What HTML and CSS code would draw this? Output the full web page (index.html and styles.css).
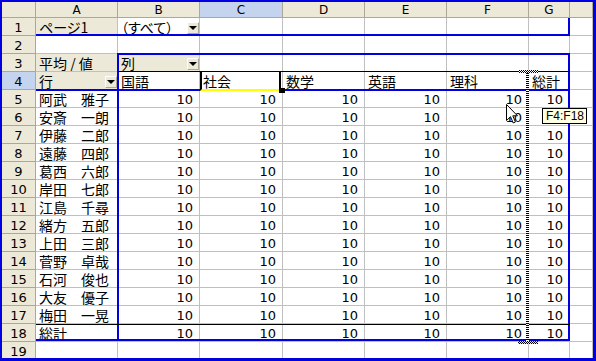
FILE: index.html
```html
<html>
    <head>
        <meta charset="utf-8">
        <title>ピボットテーブル</title>
        <link rel="stylesheet" href="styles.css">
    </head>
    <body>
        <div class="sheet">
            <div class="cells">
                <div class="ch"></div><div class="ch">A</div><div class="ch">B</div><div class="ch on">C</div><div class="ch">D</div><div class="ch">E</div><div class="ch">F</div><div class="ch">G</div><div class="ch"></div>

                <div class="rh">1</div><div class="fld pa">ページ1</div><div class="dd pa">（すべて）<i class="arrow"></i></div><div></div><div></div><div></div><div></div><div></div><div></div>
                <div class="rh">2</div><div></div><div></div><div></div><div></div><div></div><div></div><div></div><div></div>
                <div class="rh">3</div><div class="fld">平均 / 値</div><div class="fld dd">列<i class="arrow"></i></div><div></div><div></div><div></div><div></div><div></div><div></div>
                <div class="rh on">4</div><div class="fld dd">行<i class="arrow"></i></div><div>国語</div><div>社会</div><div>数学</div><div>英語</div><div>理科</div><div>総計</div><div></div>

                <div class="rh">5</div><div>阿武　雅子</div><div class="n">10</div><div class="n">10</div><div class="n">10</div><div class="n">10</div><div class="n">10</div><div class="n">10</div><div></div>
                <div class="rh">6</div><div>安斎　一朗</div><div class="n">10</div><div class="n">10</div><div class="n">10</div><div class="n">10</div><div class="n">10</div><div class="n">10</div><div></div>
                <div class="rh">7</div><div>伊藤　二郎</div><div class="n">10</div><div class="n">10</div><div class="n">10</div><div class="n">10</div><div class="n">10</div><div class="n">10</div><div></div>
                <div class="rh">8</div><div>遠藤　四郎</div><div class="n">10</div><div class="n">10</div><div class="n">10</div><div class="n">10</div><div class="n">10</div><div class="n">10</div><div></div>
                <div class="rh">9</div><div>葛西　六郎</div><div class="n">10</div><div class="n">10</div><div class="n">10</div><div class="n">10</div><div class="n">10</div><div class="n">10</div><div></div>
                <div class="rh">10</div><div>岸田　七郎</div><div class="n">10</div><div class="n">10</div><div class="n">10</div><div class="n">10</div><div class="n">10</div><div class="n">10</div><div></div>
                <div class="rh">11</div><div>江島　千尋</div><div class="n">10</div><div class="n">10</div><div class="n">10</div><div class="n">10</div><div class="n">10</div><div class="n">10</div><div></div>
                <div class="rh">12</div><div>緒方　五郎</div><div class="n">10</div><div class="n">10</div><div class="n">10</div><div class="n">10</div><div class="n">10</div><div class="n">10</div><div></div>
                <div class="rh">13</div><div>上田　三郎</div><div class="n">10</div><div class="n">10</div><div class="n">10</div><div class="n">10</div><div class="n">10</div><div class="n">10</div><div></div>
                <div class="rh">14</div><div>菅野　卓哉</div><div class="n">10</div><div class="n">10</div><div class="n">10</div><div class="n">10</div><div class="n">10</div><div class="n">10</div><div></div>
                <div class="rh">15</div><div>石河　俊也</div><div class="n">10</div><div class="n">10</div><div class="n">10</div><div class="n">10</div><div class="n">10</div><div class="n">10</div><div></div>
                <div class="rh">16</div><div>大友　優子</div><div class="n">10</div><div class="n">10</div><div class="n">10</div><div class="n">10</div><div class="n">10</div><div class="n">10</div><div></div>
                <div class="rh">17</div><div>梅田　一晃</div><div class="n">10</div><div class="n">10</div><div class="n">10</div><div class="n">10</div><div class="n">10</div><div class="n">10</div><div></div>
                <div class="rh">18</div><div>総計</div><div class="n">10</div><div class="n">10</div><div class="n">10</div><div class="n">10</div><div class="n">10</div><div class="n">10</div><div></div>
                <div class="rh">19</div><div></div><div></div><div></div><div></div><div></div><div></div><div></div><div></div>
            </div>

            <div class="marks">
                <div class="pv-page"></div>
                <div class="pv-data"></div>
                <div class="pv-rows"></div>
                <div class="pv-foot"></div>
                <div class="rule4"></div>
                <div class="rule18"></div>
                <div class="active"></div>
                <div class="ibeam"><i class="cap"></i><i class="bar"></i><i class="cap low"></i></div>
                <svg class="cursor" width="12" height="20" viewBox="0 0 12 20">
                    <path d="M0.5 0.5 L0.5 16.5 L4.5 12.7 L7.2 19 L9.4 18 L6.8 11.8 L11.5 11.8 Z" fill="#fff" stroke="#000" stroke-width="1"/>
                </svg>
                <div class="tip">F4:F18</div>
            </div>
        </div>
    </body>
</html>
```

FILE: styles.css
```css
* {
    box-sizing: border-box;
}
body {
    margin: 0;
    background: #fff;
    color: #000;
    font-family: "Noto Sans CJK JP", sans-serif;
    font-size: 14px;
}
.sheet {
    width: 596px;
    height: 361px;
    border: solid #0000e0;
    border-width: 2px 3px 3px 2px;
    display: grid;
    grid-template: 1fr / 1fr;
    overflow: hidden;
}
.cells,
.marks {
    grid-area: 1 / 1;
    display: grid;
    grid-template-columns: 34px 82px 82px 83px 82px 82px 82px 41px 1fr;
    grid-template-rows: 16px repeat(18, 18px) 1fr;
}
.marks {
    pointer-events: none;
}

/* cells */
.cells > div {
    border-right: 1px solid #c0c0c0;
    border-bottom: 1px solid #c0c0c0;
    white-space: nowrap;
    overflow: hidden;
    line-height: 16px;
    padding: 1px 3px 0 3px;
}
.cells > .ch,
.cells > .rh {
    background: #ece9d8;
    border-color: #aca899;
    font-family: "DejaVu Sans", sans-serif;
    text-align: center;
    padding: 0;
}
.cells > .ch {
    font-size: 12px;
    line-height: 13px;
    padding-top: 2px;
}
.cells > .rh {
    font-size: 13px;
    line-height: 15px;
    padding-top: 2px;
}
.cells > .on {
    background: #c4d4ef;
}
.cells > .n {
    text-align: right;
    font-family: "DejaVu Sans", sans-serif;
    font-size: 13px;
    line-height: 14px;
    padding: 3px 6px 0 0;
}
.fld {
    background: #ece9d8;
}
.pa {
    font-feature-settings: "palt";
}
.cells > .dd {
    display: flex;
    justify-content: space-between;
    align-items: flex-end;
    padding-right: 0;
}
.arrow {
    flex: none;
    width: 12px;
    height: 12px;
    margin-bottom: 1px;
    background: #ece9d8;
    border: 1px solid;
    border-color: #fff #aca899 #aca899 #fff;
    display: flex;
    align-items: center;
    justify-content: center;
}
.arrow::before {
    content: "";
    border-left: 4px solid transparent;
    border-right: 4px solid transparent;
    border-top: 4px solid #000;
}

/* pivot table outline */
.pv-page {
    grid-row: 2;
    grid-column: 2 / 9;
    border-bottom: 2px solid #0000e0;
    border-right: 2px solid #0000e0;
}
.pv-data {
    grid-row: 4 / 20;
    grid-column: 3 / 9;
    border: 2px solid #0000e0;
    margin: -1px 0 1px -1px;
}
.pv-rows {
    grid-row: 5;
    grid-column: 2 / 9;
    border-bottom: 2px solid #0000e0;
    margin-bottom: -1px;
}
.pv-foot {
    grid-row: 19;
    grid-column: 2 / 3;
    border-bottom: 2px solid #0000e0;
    margin-bottom: 1px;
}
.rule4 {
    grid-row: 5;
    grid-column: 3 / 9;
    border-top: 1px solid #000;
    margin-top: -1px;
}
.rule18 {
    grid-row: 19;
    grid-column: 2 / 9;
    border-top: 1px solid #000;
}
.active {
    grid-row: 5;
    grid-column: 4;
    position: relative;
    border-style: solid;
    border-color: #000 #000 #ffff00 #000;
    border-width: 1px 2px 2px 2px;
    margin: -1px 2px -1px 0;
}
.active::after {
    content: "";
    position: absolute;
    right: -6px;
    bottom: -4px;
    width: 6px;
    height: 5px;
    background: #000;
}

/* drag indicator */
.ibeam {
    grid-row: 5 / 20;
    grid-column: 8;
    justify-self: start;
    width: 20px;
    margin: -2px 0 -2px -11px;
    display: flex;
    flex-direction: column;
}
.ibeam i {
    display: block;
}
.cap {
    height: 3px;
    background: repeating-conic-gradient(#000 0 25%, #fff 0 50%) 0 0 / 2px 2px;
}
.cap.low {
    background: repeating-conic-gradient(#000 0 25%, #ffff00 0 50%) 0 0 / 2px 2px;
}
.bar {
    flex: 1;
    width: 3px;
    margin-left: 8px;
    background: repeating-linear-gradient(#000 0 1px, #fff 1px 2px);
}
.cursor {
    grid-row: 6;
    grid-column: 7;
    justify-self: start;
    align-self: start;
    margin: 14px 0 0 59px;
}
.tip {
    grid-row: 7;
    grid-column: 8 / 10;
    justify-self: start;
    align-self: start;
    width: 45px;
    height: 16px;
    margin-left: 13px;
    background: #ffffe1;
    border: 1px solid #000;
    font-family: "Liberation Sans", sans-serif;
    font-size: 12px;
    line-height: 14px;
    padding-left: 3px;
    white-space: nowrap;
    overflow: hidden;
}
```
